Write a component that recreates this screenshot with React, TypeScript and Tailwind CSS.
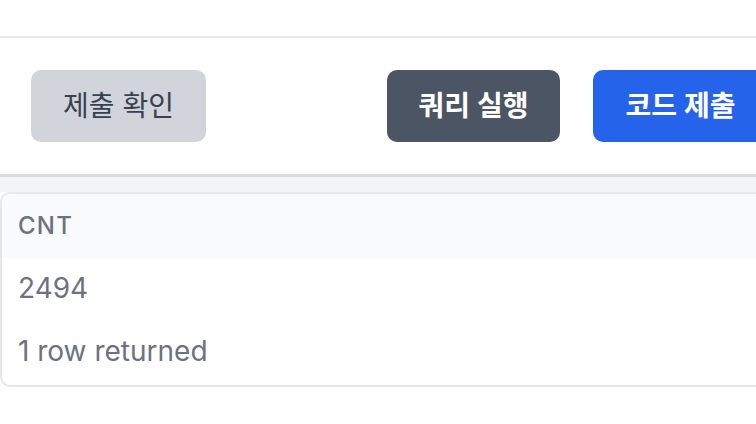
import React from 'react';

// 쿼리 결과 화면 (2배 확대 스크린샷 기준)

const FONT = { fontFamily: 'Inter, "Noto Sans CJK KR", sans-serif' };

export default function App() {
  return (
    <div className="w-[756px] h-[424px] overflow-hidden bg-white" style={FONT}>
      <div className="w-[799px]">
        {/* 상단 영역 */}
        <div className="h-[38px] border-b-2 border-[#e5e7eb]" />

        {/* 버튼 바 */}
        <div className="flex items-center justify-between px-[31px] py-[32px] border-b-[3px] border-[#dadbe0]">
          <button className="h-[72px] w-[175px] rounded-[10px] bg-[#d1d5db] text-[#374151] text-[28px] leading-[40px]">
            제출 확인
          </button>
          <div className="flex gap-[33px]">
            <button className="h-[72px] w-[173px] rounded-[10px] bg-[#4b5563] text-white font-semibold text-[28px] leading-[40px]">
              쿼리 실행
            </button>
            <button className="h-[72px] w-[175px] rounded-[10px] bg-[#2563eb] text-white font-semibold text-[28px] leading-[40px]">
              코드 제출
            </button>
          </div>
        </div>

        {/* 구분 영역 */}
        <div className="h-[15px] bg-[#f3f4f6]" />

        {/* 결과 테이블 */}
        <div className="border-2 border-[#e5e7eb] rounded-[10px] overflow-hidden">
          <div className="bg-[#f9fafb] px-[16px] py-[16px] text-[24px] leading-[32px] font-medium tracking-wider text-[#6b7280] uppercase">
            CNT
          </div>
          <div className="px-[16px] py-[10px] text-[28px] leading-[40px] text-[#6b7280]">2494</div>
          <div className="px-[16px] pt-[13px] pb-[14px] text-[28px] leading-[40px] text-[#6b7280]">
            1 row returned
          </div>
        </div>
      </div>
    </div>
  );
}
